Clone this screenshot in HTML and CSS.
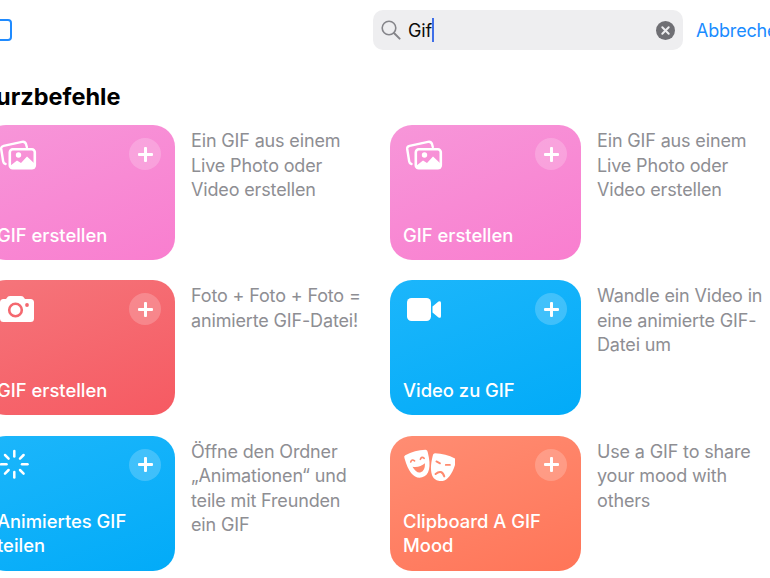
FILE: index.html
```html
<!DOCTYPE html>
<html lang="de">
<head>
    <meta charset="UTF-8">
    <meta name="viewport" content="width=device-width, initial-scale=1.0">
    <title>Kurzbefehle suchen</title>
    <link rel="stylesheet" href="styles.css">
</head>
<body>
    <div class="page">
        <header class="top-bar">
            <div class="edit-box"></div>
            <div class="search-field">
                <svg class="search-icon" viewBox="0 0 20 20" width="20" height="20">
                    <circle cx="8" cy="8" r="6.8" fill="none" stroke="#85858a" stroke-width="1.6"/>
                    <path d="M13 13 L18.6 18.6" stroke="#85858a" stroke-width="2" stroke-linecap="round"/>
                </svg>
                <span class="search-text">Gif</span>
                <span class="caret"></span>
                <svg class="clear-icon" viewBox="0 0 19 19" width="19" height="19">
                    <circle cx="9.5" cy="9.5" r="9.5" fill="#6f6f74"/>
                    <path d="M6.3 6.3 L12.7 12.7 M12.7 6.3 L6.3 12.7" stroke="#eeeef0" stroke-width="2" stroke-linecap="round"/>
                </svg>
            </div>
            <span class="cancel">Abbrechen</span>
        </header>

        <h1 class="section-title">Kurzbefehle</h1>

        <main class="shortcut-grid">
            <div class="shortcut">
                <div class="card card-pink">
                    <div class="card-top">
                        <svg class="card-icon" viewBox="0 0 52 32">
                            <path d="M8.5 26 Q6.5 25.5 6.2 23.5 L4.2 11 Q3.9 8.4 6.6 7.8 L25 3.8 Q28 3.2 29 6 L29.8 9" fill="none" stroke="#fff" stroke-width="2.4" stroke-linecap="round"/>
                            <rect x="12.8" y="11.2" width="25" height="19" rx="3" fill="none" stroke="#fff" stroke-width="2.6"/>
                            <circle cx="21.5" cy="17" r="2.7" fill="#fff"/>
                            <path d="M13 28 L20 22.5 L24 25 L30 18.5 L38 26 V30.5 H13 Z" fill="#fff"/>
                        </svg>
                        <span class="add-btn"></span>
                    </div>
                    <div class="card-title">GIF erstellen</div>
                </div>
                <p class="description">Ein GIF aus einem Live Photo oder Video erstellen</p>
            </div>

            <div class="shortcut">
                <div class="card card-pink">
                    <div class="card-top">
                        <svg class="card-icon" viewBox="0 0 52 32">
                            <path d="M8.5 26 Q6.5 25.5 6.2 23.5 L4.2 11 Q3.9 8.4 6.6 7.8 L25 3.8 Q28 3.2 29 6 L29.8 9" fill="none" stroke="#fff" stroke-width="2.4" stroke-linecap="round"/>
                            <rect x="12.8" y="11.2" width="25" height="19" rx="3" fill="none" stroke="#fff" stroke-width="2.6"/>
                            <circle cx="21.5" cy="17" r="2.7" fill="#fff"/>
                            <path d="M13 28 L20 22.5 L24 25 L30 18.5 L38 26 V30.5 H13 Z" fill="#fff"/>
                        </svg>
                        <span class="add-btn"></span>
                    </div>
                    <div class="card-title">GIF erstellen</div>
                </div>
                <p class="description">Ein GIF aus einem Live Photo oder Video erstellen</p>
            </div>

            <div class="shortcut">
                <div class="card card-red">
                    <div class="card-top">
                        <svg class="card-icon" viewBox="0 0 52 32">
                            <path d="M9 6 L11 3.6 Q11.8 3 13 3 H24 Q25.2 3 26 3.6 L28 6 H33.5 Q37 6 37 9.5 V25.5 Q37 29 33.5 29 H6.5 Q3 29 3 25.5 V9.5 Q3 6 6.5 6 Z" fill="#fff"/>
                            <circle cx="18.5" cy="17" r="6.3" fill="none" stroke="#f4686f" stroke-width="2.6"/>
                            <circle cx="30" cy="12" r="1.9" fill="#f4686f"/>
                        </svg>
                        <span class="add-btn"></span>
                    </div>
                    <div class="card-title">GIF erstellen</div>
                </div>
                <p class="description">Foto + Foto + Foto = animierte GIF-Datei!</p>
            </div>

            <div class="shortcut">
                <div class="card card-blue">
                    <div class="card-top">
                        <svg class="card-icon" viewBox="0 0 52 32">
                            <rect x="4" y="5" width="24" height="23" rx="4.5" fill="#fff"/>
                            <path d="M29.5 13.5 L35.5 8.6 Q38 7.2 38 10 V23 Q38 25.8 35.5 24.4 L29.5 19.5 Z" fill="#fff"/>
                        </svg>
                        <span class="add-btn"></span>
                    </div>
                    <div class="card-title">Video zu GIF</div>
                </div>
                <p class="description">Wandle ein Video in eine animierte GIF-Datei um</p>
            </div>

            <div class="shortcut">
                <div class="card card-blue">
                    <div class="card-top">
                        <svg class="card-icon" viewBox="0 0 52 32">
                            <g stroke="#fff" stroke-width="2.5" stroke-linecap="round">
                                <path d="M17.3 2 V7.5"/>
                                <path d="M17.3 23 V28.5"/>
                                <path d="M4 15.3 H9.5"/>
                                <path d="M25 15.3 H30.5"/>
                                <path d="M8 6 L11.6 9.6"/>
                                <path d="M23 21 L26.6 24.6"/>
                                <path d="M8 24.6 L11.6 21"/>
                                <path d="M23 9.6 L26.6 6"/>
                            </g>
                        </svg>
                        <span class="add-btn"></span>
                    </div>
                    <div class="card-title">Animiertes GIF teilen</div>
                </div>
                <p class="description">Öffne den Ordner „Animationen“ und teile mit Freunden ein GIF</p>
            </div>

            <div class="shortcut">
                <div class="card card-coral">
                    <div class="card-top">
                        <svg class="card-icon" viewBox="0 0 52 32">
                            <g transform="translate(15.5 15) rotate(-15)">
                                <path d="M-10.5 -12 Q0 -14.5 10.5 -12 Q12.5 -11.5 12 -9 C11.8 6 7.5 13.8 0 13.8 C-7.5 13.8 -11.8 6 -12 -9 Q-12.5 -11.5 -10.5 -12 Z" fill="#fff"/>
                                <path d="M-7 -4 Q-5 -7 -3 -4 M3 -4 Q5 -7 7 -4" fill="none" stroke="#ff8a6e" stroke-width="1.6" stroke-linecap="round"/>
                                <path d="M-6.5 1 Q0 4 6.5 1 Q4.5 8.5 0 8.5 Q-4.5 8.5 -6.5 1 Z" fill="#ff8a6e"/>
                            </g>
                            <g transform="translate(39 18.5) rotate(15)">
                                <path d="M-10.5 -12 Q0 -14.5 10.5 -12 Q12.5 -11.5 12 -9 C11.8 6 7.5 13.8 0 13.8 C-7.5 13.8 -11.8 6 -12 -9 Q-12.5 -11.5 -10.5 -12 Z" fill="#fff"/>
                                <path d="M-7 -4.5 L-3 -3.5 M3 -3.5 L7 -4.5" stroke="#ff8a6e" stroke-width="1.8" stroke-linecap="round"/>
                                <path d="M-4.5 8 Q0 1.5 4.5 8" fill="none" stroke="#ff8a6e" stroke-width="2" stroke-linecap="round"/>
                            </g>
                        </svg>
                        <span class="add-btn"></span>
                    </div>
                    <div class="card-title">Clipboard A GIF Mood</div>
                </div>
                <p class="description">Use a GIF to share your mood with others</p>
            </div>
        </main>
    </div>
</body>
</html>
```

FILE: styles.css
```css
* {
    box-sizing: border-box;
}
html, body {
    height: 100%;
}
body {
    margin: 0;
    background-color: #ffffff;
    font-family: Inter, 'Noto Sans', sans-serif;
    overflow: hidden;
}
.page {
    width: 900px;
    margin-left: -16px;
}

/* top bar */
.top-bar {
    display: flex;
    align-items: center;
    height: 40px;
    margin-top: 10px;
    padding-left: 6px;
}
.edit-box {
    width: 22px;
    height: 22px;
    border: 2px solid #1f8bff;
    border-radius: 4px;
}
.search-field {
    display: flex;
    align-items: center;
    width: 310px;
    height: 40px;
    margin-left: 361px;
    padding: 0 8px;
    background-color: #eeeef0;
    border-radius: 10px;
}
.search-icon {
    flex: none;
}
.search-text {
    margin-left: 7px;
    font-size: 18px;
    letter-spacing: -0.2px;
    color: #0b0b0b;
}
.caret {
    width: 2px;
    height: 24px;
    background-color: #3f6fe8;
}
.clear-icon {
    margin-left: auto;
}
.cancel {
    margin-left: 13px;
    font-size: 18px;
    letter-spacing: -0.2px;
    color: #1a8cff;
}

.section-title {
    margin: 33px 0 14px -4px;
    font-size: 23.5px;
    line-height: 28px;
    font-weight: 700;
    color: #000000;
}

/* cards */
.shortcut-grid {
    display: grid;
    grid-template-columns: 406px 406px;
    row-gap: 20.4px;
}
.shortcut {
    display: flex;
    gap: 16px;
}
.card {
    display: flex;
    flex-direction: column;
    justify-content: space-between;
    width: 191px;
    height: 135px;
    padding: 13px 14px 13px 13px;
    border-radius: 22px;
    color: #ffffff;
}
.card-top {
    display: flex;
    justify-content: space-between;
}
.card-icon {
    width: 52px;
    height: 32px;
}
.card-title {
    font-size: 18.4px;
    line-height: 24.5px;
    font-weight: 500;
}
.card-pink {
    background: linear-gradient(160deg, #f796d9, #f97ecf);
}
.card-red {
    background: linear-gradient(160deg, #f5757b, #f65a62);
}
.card-blue {
    background: linear-gradient(160deg, #1cb6fb, #02abf8);
}
.card-coral {
    background: linear-gradient(160deg, #ff8d73, #ff7558);
}
.add-btn {
    position: relative;
    width: 32px;
    height: 32px;
    border-radius: 50%;
    background-color: rgba(255, 255, 255, 0.2);
}
.add-btn::before,
.add-btn::after {
    content: '';
    position: absolute;
    top: 14.5px;
    left: 8.5px;
    width: 15px;
    height: 3px;
    border-radius: 1px;
    background-color: #ffffff;
}
.add-btn::after {
    transform: rotate(90deg);
}
.description {
    width: 176px;
    margin: 4px 0 0;
    font-size: 18px;
    letter-spacing: -0.15px;
    line-height: 24.5px;
    color: #8e8e93;
}
```
